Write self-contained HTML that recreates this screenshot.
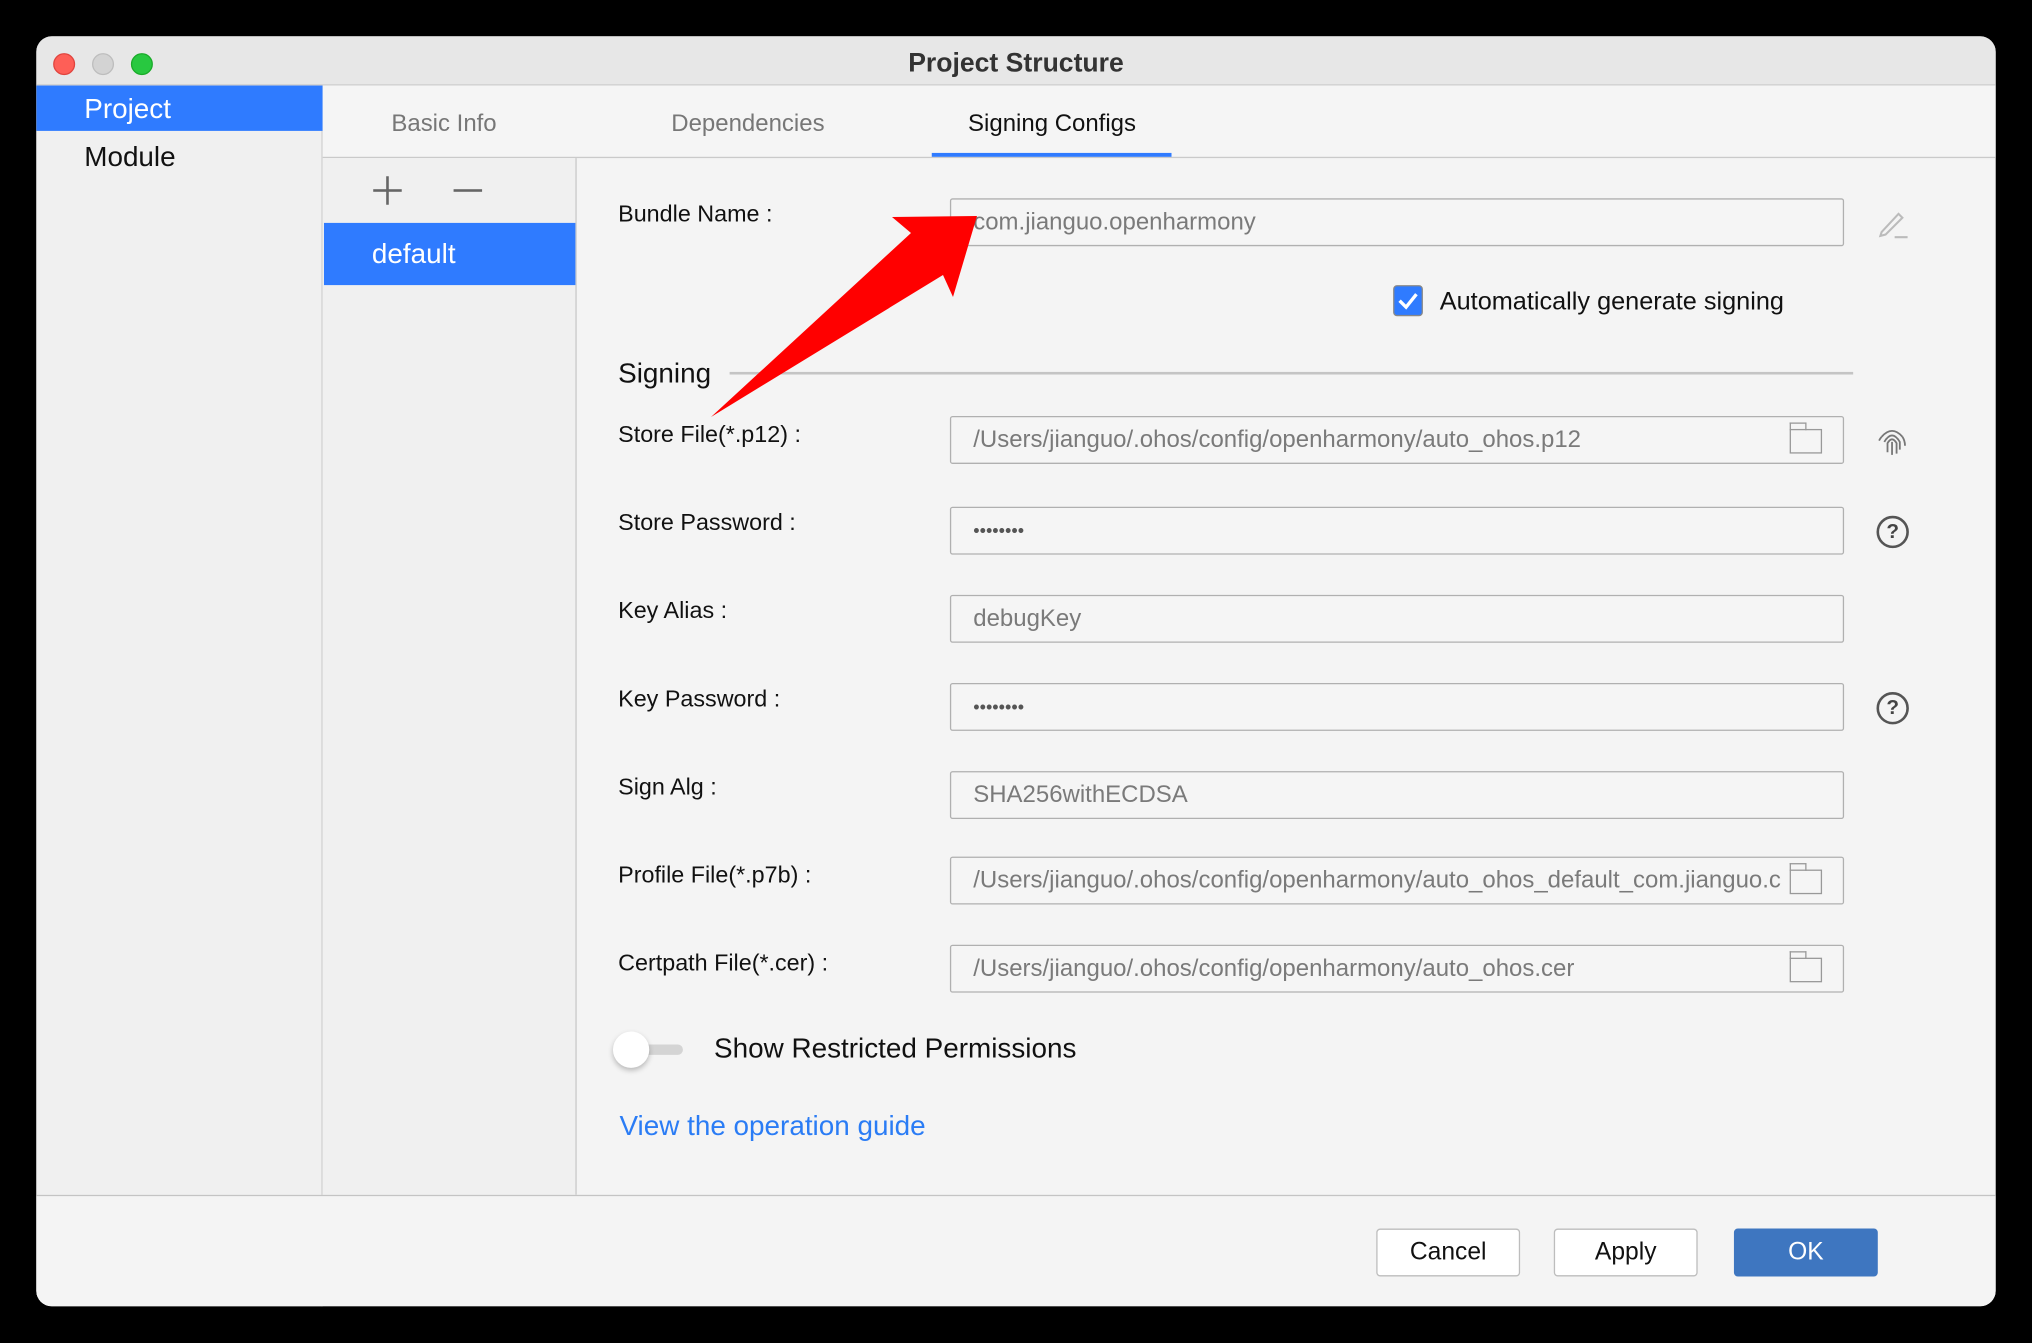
<!DOCTYPE html>
<html><head><meta charset="utf-8"><style>
*{margin:0;padding:0;box-sizing:border-box}
body{width:2032px;height:1342px;background:#000;overflow:hidden;position:relative;font-family:"Liberation Sans",Arial,sans-serif}
#w{position:absolute;left:0;top:0;width:1568px;height:1036px;transform:scale(1.29592);transform-origin:0 0}
.a{position:absolute}
.win{left:28px;top:28px;width:1512px;height:980px;background:#f4f4f4;border-radius:12px;overflow:hidden}
.lbl{position:absolute;left:477px;font-size:18px;color:#111}
.fld{position:absolute;left:733px;width:690px;height:37px;border:1.5px solid #b0b0b0;border-radius:2px;background:#f5f5f5;color:#7a7a7a;font-size:18.5px;padding-left:17px;line-height:34px;white-space:nowrap;overflow:hidden}
.fold{position:absolute;right:16px;top:9px;width:25px;height:19px;border:1.5px solid #999;border-top-width:1.5px;background:#f5f5f5}
.fold:before{content:"";position:absolute;left:-1.5px;top:-6px;width:11px;height:5px;border:1.5px solid #999;border-bottom:none}
.q{position:absolute;left:1448px;width:25px;height:25px;border:2px solid #555;border-radius:50%;font-size:16px;font-weight:bold;text-align:center;line-height:21px;color:#444}
.btn{position:absolute;top:948px;width:111px;height:37px;border:1px solid #bdbdbd;border-radius:3px;background:#fff;font-size:19px;text-align:center;line-height:35px;color:#111}
</style></head><body>
<div id="w">
<div class="a win">
 <div class="a" style="left:0;top:0;width:1512px;height:38px;background:#e7e7e7;border-bottom:1px solid #cfcfcf"></div>
 <div class="a" style="left:13px;top:13px;width:17px;height:17px;border-radius:50%;background:#fe5f57;border:1px solid #e0443e"></div>
 <div class="a" style="left:43px;top:13px;width:17px;height:17px;border-radius:50%;background:#d3d3d3;border:1px solid #bdbdbd"></div>
 <div class="a" style="left:73px;top:13px;width:17px;height:17px;border-radius:50%;background:#28c840;border:1px solid #1aab29"></div>
 <div class="a" style="left:0;top:9px;width:1512px;text-align:center;font-size:20.5px;font-weight:bold;color:#333">Project Structure</div>
 <div class="a" style="left:0;top:38px;width:221px;height:942px;background:#f0f0f0;border-right:1px solid #cfcfcf"></div>
 <div class="a" style="left:0;top:38px;width:221px;height:35px;background:#2f7bff"></div>
 <div class="a" style="left:37px;top:44px;font-size:21.5px;color:#fff">Project</div>
 <div class="a" style="left:37px;top:81px;font-size:21.5px;color:#111">Module</div>
 <div class="a" style="left:221px;top:38px;width:1291px;height:56px;background:#f5f5f5;border-bottom:1.5px solid #cacaca"></div>
 <div class="a" style="left:274px;top:56px;font-size:18.5px;color:#777">Basic Info</div>
 <div class="a" style="left:490px;top:56px;font-size:18.5px;color:#777">Dependencies</div>
 <div class="a" style="left:719px;top:56px;font-size:18.5px;color:#111">Signing Configs</div>
 <div class="a" style="left:691px;top:90px;width:185px;height:3px;background:#2f7bff"></div>
 <div class="a" style="left:221px;top:94px;width:196px;height:800px;background:#f0f0f0;border-right:1.5px solid #cacaca"></div>
 <div class="a" style="left:260px;top:118px;width:22px;height:2px;background:#666"></div>
 <div class="a" style="left:270px;top:108px;width:2px;height:22px;background:#666"></div>
 <div class="a" style="left:322px;top:118px;width:22px;height:2px;background:#666"></div>
 <div class="a" style="left:222px;top:144px;width:194px;height:48px;background:#2f7bff"></div>
 <div class="a" style="left:259px;top:156px;font-size:21.5px;color:#fff">default</div>
 <div class="a" style="left:0;top:894px;width:1512px;height:86px;background:#f4f4f4;border-top:1.5px solid #c4c4c4"></div>
</div>
<div class="lbl" style="top:155px">Bundle Name :</div>
<div class="fld" style="top:153px">com.jianguo.openharmony</div>
<svg class="a" style="left:1448px;top:160px" width="26" height="26" viewBox="0 0 26 26"><path d="M4 19 L17 5 L20 8 L7 21 L3 22 Z" fill="none" stroke="#bbb" stroke-width="1.6"/><path d="M14 23 H24" stroke="#bbb" stroke-width="1.6"/></svg>
<div class="a" style="left:1075px;top:220px;width:23px;height:24px;background:#2f7bff;border:1px solid #888;border-radius:3px"></div>
<svg class="a" style="left:1075px;top:220px" width="23" height="24"><path d="M5 12 L10 17 L18 7" fill="none" stroke="#fff" stroke-width="2.6"/></svg>
<div class="a" style="left:1111px;top:222px;font-size:19.5px;color:#111">Automatically generate signing</div>
<div class="a" style="left:477px;top:276px;font-size:21.5px;color:#111">Signing</div>
<div class="a" style="left:563px;top:287px;width:867px;height:1.5px;background:#c4c4c4"></div>

<div class="lbl" style="top:325px">Store File(*.p12) :</div>
<div class="fld" style="top:321px">/Users/jianguo/.ohos/config/openharmony/auto_ohos.p12<div class="fold"></div></div>
<svg class="a" style="left:1447px;top:327px" width="26" height="26" viewBox="0 0 26 26" fill="none" stroke="#777" stroke-width="1.4"><path d="M5 10 Q13 1 21 10"/><path d="M7 14 Q13 4 19 14 V20"/><path d="M9.5 22 V15 Q13 9 16.5 15 V23"/><path d="M13 14 V24"/><path d="M3 13 Q4 11 5 10"/><path d="M21 10 Q23 13 23 17"/></svg>
<div class="lbl" style="top:393px">Store Password :</div>
<div class="fld" style="top:391px;color:#555;font-size:14px">••••••••</div>
<div class="q" style="top:398px">?</div>
<div class="lbl" style="top:461px">Key Alias :</div>
<div class="fld" style="top:459px">debugKey</div>
<div class="lbl" style="top:529px">Key Password :</div>
<div class="fld" style="top:527px;color:#555;font-size:14px">••••••••</div>
<div class="q" style="top:534px">?</div>
<div class="lbl" style="top:597px">Sign Alg :</div>
<div class="fld" style="top:595px">SHA256withECDSA</div>
<div class="lbl" style="top:665px">Profile File(*.p7b) :</div>
<div class="fld" style="top:661px;padding-right:50px">/Users/jianguo/.ohos/config/openharmony/auto_ohos_default_com.jianguo.c<div class="fold"></div></div>
<div class="lbl" style="top:733px">Certpath File(*.cer) :</div>
<div class="fld" style="top:729px">/Users/jianguo/.ohos/config/openharmony/auto_ohos.cer<div class="fold"></div></div>

<div class="a" style="left:480px;top:806px;width:47px;height:8px;background:#d4d4d4;border-radius:4px"></div>
<div class="a" style="left:473px;top:796px;width:28px;height:28px;background:#fff;border-radius:50%;box-shadow:0 2px 4px rgba(0,0,0,.25)"></div>
<div class="a" style="left:551px;top:797px;font-size:21.5px;color:#111">Show Restricted Permissions</div>
<div class="a" style="left:478px;top:857px;font-size:21.5px;color:#2a7cf5">View the operation guide</div>

<div class="btn" style="left:1062px">Cancel</div>
<div class="btn" style="left:1199px">Apply</div>
<div class="btn" style="left:1338px;background:#3e76c0;border-color:#3e76c0;color:#fff">OK</div>
</div>
<svg class="a" style="left:0;top:0" width="2032" height="1342"><polygon points="977,216 892,217 911,233 711,417 943,275 953,297" fill="#ff0000"/></svg>
</body></html>
